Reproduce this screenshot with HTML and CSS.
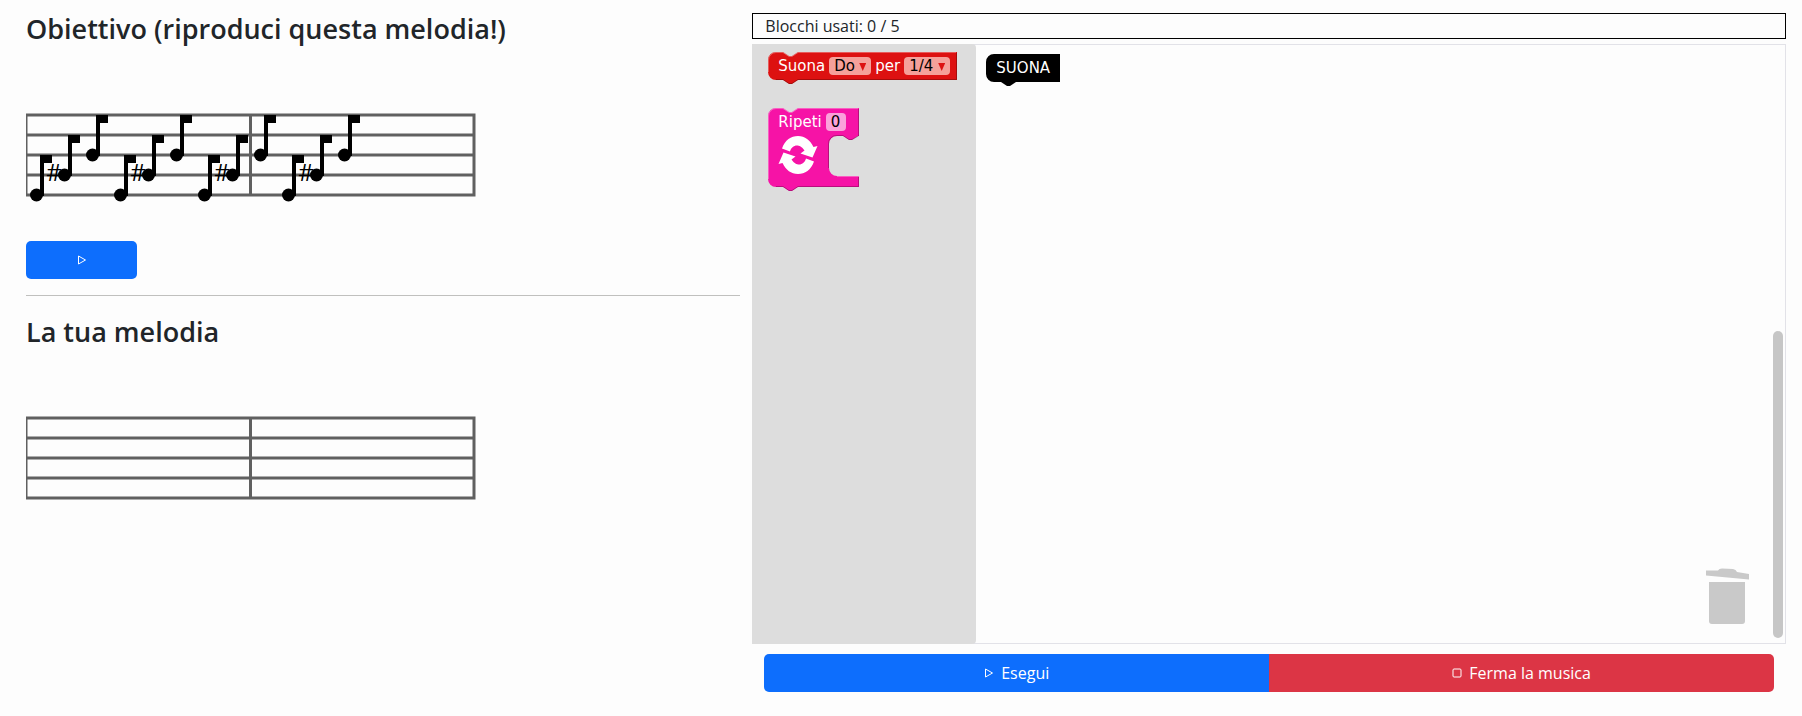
FILE: index.html
```html
<!DOCTYPE html>
<html lang="it">
<head>
<meta charset="utf-8">
<title>Melodia a blocchi</title>
<link rel="stylesheet" href="styles.css">
</head>
<body>
<svg class="defs" aria-hidden="true">
  <defs>
    <g id="staff" class="staff-lines">
      <path d="M0 60H448M0 80H448M0 100H448M0 120H448M0 140H448M0 60V140M224.500 60V140M448 58.500V141.500"/>
    </g>
    <g id="note">
      <circle cx="10.500" cy="0" r="6.500"/>
      <path d="M14 1V-40H26V-32H18V1Z"/>
    </g>
  </defs>
</svg>
<div class="page">
  <main class="score">
    <section>
      <h1 class="title">Obiettivo (riproduci questa melodia!)</h1>
      <svg class="staff" width="450" height="170" role="img" aria-label="Melodia obiettivo">
        <use href="#staff"/>
        <use href="#note" x="0" y="140"/><use href="#note" x="28" y="120"/><use href="#note" x="56" y="100"/>
        <use href="#note" x="84" y="140"/><use href="#note" x="112" y="120"/><use href="#note" x="140" y="100"/>
        <use href="#note" x="168" y="140"/><use href="#note" x="196" y="120"/><use href="#note" x="224" y="100"/>
        <use href="#note" x="252" y="140"/><use href="#note" x="280" y="120"/><use href="#note" x="308" y="100"/>
        <g class="sharps">
          <text x="28" y="126">#</text><text x="112" y="126">#</text><text x="196" y="126">#</text><text x="280" y="126">#</text>
        </g>
      </svg>
      <button class="btn btn-play" type="button" aria-label="Riproduci">
        <svg class="icon" viewBox="0 0 10 10"><path d="M1.500 1L8.500 5L1.500 9Z"/></svg>
      </button>
    </section>
    <hr class="rule">
    <section>
      <h2 class="title">La tua melodia</h2>
      <svg class="staff" width="450" height="170" role="img" aria-label="La tua melodia"><use href="#staff"/></svg>
    </section>
  </main>
  <div class="editor">
    <div class="counter">Blocchi usati: 0 / 5</div>
    <div class="workspace">
      <div class="toolbox">
        <div class="block block-note">
          <svg class="shape" width="189" height="33">
            <path class="red" d="M0 8A8 8 0 0 1 8 0H15L21 4H24L30 0H189V28H30L24 32H21L15 28H8A8 8 0 0 1 0 20Z"/>
            <path class="light" d="M.5 20V8A7.500 7.500 0 0 1 8 .5H15L21 4.500H24L30 .5H188"/>
            <path class="shade" d="M188.500 1V27.500H30L24 31.500H21L15 27.500H8"/>
          </svg>
          <label for="pitch">Suona</label>
          <span class="pick"><select id="pitch"><option>Do</option><option>Re</option><option>Mi</option></select></span>
          <label for="length">per</label>
          <span class="pick"><select id="length" class="wide"><option>1/4</option><option>1/8</option></select></span>
        </div>
        <div class="block block-loop">
          <svg class="shape" width="91" height="84">
            <path class="pink" d="M0 8A8 8 0 0 1 8 0H15L21 4H24L30 0H91V28H90L84 32H81L75 28H69A8 8 0 0 0 61 36V60A8 8 0 0 0 69 68H91V79H30L24 83H21L15 79H8A8 8 0 0 1 0 71Z"/>
            <path class="light" d="M.5 71V8A7.500 7.500 0 0 1 8 .5H15L21 4.500H24L30 .5H90M69 68.500H91"/>
            <path class="shade" d="M90.500 1V28L84 31.500H81L75 27.500H69A8 8 0 0 0 60.500 36V60M90.500 69V78.500H30L24 82.500H21L15 78.500H8"/>
            <g transform="translate(30 47)">
              <path id="arrow" class="arrow" d="M-16 -6.500C-13 -15 -7 -19 0 -19C7 -19 12 -15 15.500 -8L19.500 -9L14.500 2.500L2.500 -1.500L6.500 -4.500C4 -8.500 1 -9.500 -1 -9.500C-4.500 -9.500 -7 -7 -8 -3.500Z"/>
              <use href="#arrow" transform="rotate(180)"/>
            </g>
          </svg>
          <label for="times">Ripeti</label>
          <input id="times" type="text" value="0">
        </div>
      </div>
      <div class="block block-start">
        <svg class="shape" width="74" height="33">
          <path d="M0 8A8 8 0 0 1 8 0H74V28H30L24 32H21L15 28H8A8 8 0 0 1 0 20Z"/>
        </svg>
        <span>SUONA</span>
      </div>
      <svg class="trash" width="44" height="57" role="img" aria-label="Cestino">
        <path d="M0 2.500L12 2.500Q13 .5 16 .5L27 1Q30 1.500 31 4L43 6V11.500L0 7.500Z"/>
        <path d="M3 14H39V53Q39 56 36 56H6Q3 56 3 53Z"/>
      </svg>
      <div class="scrollbar"></div>
    </div>
    <div class="actions">
      <button class="btn btn-run" type="button">
        <svg class="icon" viewBox="0 0 10 10"><path d="M1.500 1L8.500 5L1.500 9Z"/></svg>
        Esegui
      </button>
      <button class="btn btn-stop" type="button">
        <svg class="icon" viewBox="0 0 10 10"><rect x="1" y="1" width="8" height="8" rx="1"/></svg>
        Ferma la musica
      </button>
    </div>
  </div>
</div>
</body>
</html>
```
FILE: styles.css
```css
* {
  box-sizing: border-box;
}

body {
  margin: 0;
  background: #fdfdfd;
  color: #212529;
  font: 16px/24px "Open Sans", "Noto Sans", sans-serif;
}

.defs {
  position: absolute;
  width: 0;
  height: 0;
}

.page {
  display: grid;
  grid-template-columns: 5fr 7fr;
  min-height: 100vh;
  padding: 13px 16px 24px 14px;
}

.score {
  padding: 0 12px;
}

.title {
  margin: 0 0 10px;
  font-size: 27px;
  font-weight: 600;
  line-height: 32px;
}

.staff {
  display: block;
  margin-bottom: 16px;
}

.staff-lines {
  fill: none;
  stroke: #606060;
  stroke-width: 3px;
}

.sharps {
  font: 24px "Open Sans", sans-serif;
  text-anchor: middle;
}

.rule {
  margin: 16px 0 20px;
  border: 0;
  border-top: 1px solid #c0c0be;
}

.btn {
  display: flex;
  align-items: center;
  justify-content: center;
  gap: 7px;
  height: 38px;
  padding: 0 12px;
  border: 0;
  border-radius: 5px;
  color: #fff;
  font: inherit;
}

.btn-play {
  width: 111px;
  background: #0d6efd;
}

.icon {
  width: 10px;
  height: 10px;
  fill: none;
  stroke: #fff;
  stroke-width: 1px;
  stroke-linejoin: round;
}

.editor {
  display: flex;
  flex-direction: column;
}

.counter {
  padding: 0 12px;
  border: 1px solid #000;
}

.workspace {
  position: relative;
  flex: 1;
  display: flex;
  margin: 5px 0 10px;
  border: 1px solid #e2e2e8;
}

.toolbox {
  display: flex;
  flex-direction: column;
  align-items: flex-start;
  gap: 28px;
  width: 224px;
  margin: -1px 0 -1px -1px;
  padding: 8px 16px;
  border-radius: 0 4px 4px 0;
  background: #ddd;
}

.block {
  position: relative;
  display: flex;
  align-items: center;
  gap: 5px;
  height: 28px;
  color: #fff;
  font: 15px/18px "DejaVu Sans", sans-serif;
}

.block > * {
  position: relative;
}

.block > .shape {
  position: absolute;
  top: 0;
  left: 0;
}

.block-note {
  gap: 4px;
  padding-left: 10px;
}

.block-loop {
  gap: 4px;
  padding-left: 10px;
}

.block-start {
  width: 74px;
  margin: 9px 0 0 10px;
  padding-left: 10px;
}

.red {
  fill: #dd1111;
}

.pink {
  fill: #f613a6;
}

.arrow {
  fill: #fff;
}

.light {
  fill: none;
  stroke: #ffffff50;
}

.shade {
  fill: none;
  stroke: #00000040;
}

.pick {
  display: flex;
}

.pick::after {
  position: absolute;
  top: 6px;
  right: 5px;
  width: 7px;
  height: 8px;
  background: #dd1111;
  clip-path: polygon(0 0, 100% 0, 50% 100%);
  content: "";
  pointer-events: none;
}

.pick select,
.block input {
  height: 18px;
  margin: 0;
  padding: 0 0 0 5px;
  border: 0;
  border-radius: 4px;
  color: #000;
  font: inherit;
  appearance: none;
}

.pick select {
  width: 42px;
  background: #f5a09a;
}

.pick .wide {
  width: 46px;
}

.block input {
  width: 20px;
  background: #fba1db;
}

.trash {
  position: absolute;
  right: 35px;
  bottom: 18px;
  fill: #c9c9c9;
}

.scrollbar {
  position: absolute;
  right: 2px;
  bottom: 5px;
  width: 10px;
  height: 307px;
  border-radius: 5px;
  background: #c6c6c6;
}

.actions {
  display: grid;
  grid-template-columns: 1fr 1fr;
  padding: 0 12px;
}

.btn-run {
  border-radius: 5px 0 0 5px;
  background: #0d6efd;
}

.btn-stop {
  border-radius: 0 5px 5px 0;
  background: #dc3545;
}
```
